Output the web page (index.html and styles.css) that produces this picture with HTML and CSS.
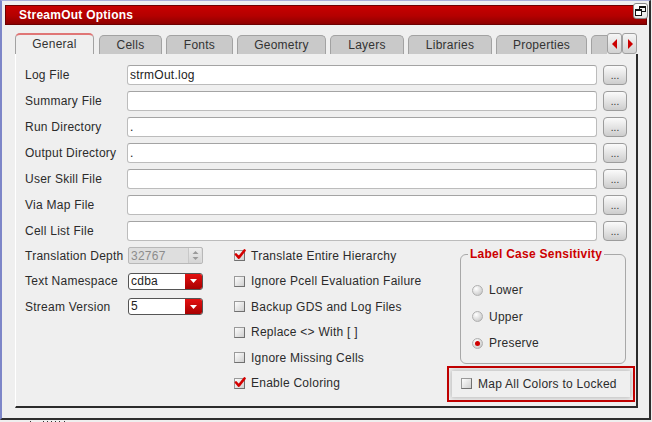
FILE: index.html
```html
<!DOCTYPE html>
<html>
<head>
<meta charset="utf-8">
<link rel="stylesheet" href="styles.css">
</head>
<body>
<div class="window">
  <div class="titlebar">StreamOut Options</div>
  <div class="restore">
    <svg width="13" height="12" viewBox="0 0 13 12">
      <rect x="5.5" y="1.5" width="6" height="5" fill="none" stroke="#111" stroke-width="1"/>
      <rect x="5" y="1" width="7" height="2" fill="#111"/>
      <rect x="1.5" y="4.5" width="6" height="6" fill="#fff" stroke="#111" stroke-width="1"/>
      <rect x="1" y="4" width="7" height="2" fill="#111"/>
    </svg>
  </div>

  <div class="tabs-row">
    <div class="tabs">
      <div class="tab active w-general">General</div>
      <div class="tab w-cells">Cells</div>
      <div class="tab w-fonts">Fonts</div>
      <div class="tab w-geometry">Geometry</div>
      <div class="tab w-layers">Layers</div>
      <div class="tab w-libraries">Libraries</div>
      <div class="tab w-properties">Properties</div>
      <div class="tab w-partial"></div>
    </div>
    <div class="tab-arrows">
      <div class="arrow-btn">
        <svg width="6" height="10" viewBox="0 0 6 10"><path d="M5 0 L0 5 L5 10 Z" fill="#cc0000"/></svg>
      </div>
      <div class="arrow-btn">
        <svg width="6" height="10" viewBox="0 0 6 10"><path d="M1 0 L6 5 L1 10 Z" fill="#cc0000"/></svg>
      </div>
    </div>
  </div>

  <div class="panel">
    <div class="file-rows">
      <div class="file-row"><span class="label">Log File</span><div class="field">strmOut.log</div><div class="dots">...</div></div>
      <div class="file-row"><span class="label">Summary File</span><div class="field"></div><div class="dots">...</div></div>
      <div class="file-row"><span class="label">Run Directory</span><div class="field">.</div><div class="dots">...</div></div>
      <div class="file-row"><span class="label">Output Directory</span><div class="field">.</div><div class="dots">...</div></div>
      <div class="file-row"><span class="label">User Skill File</span><div class="field"></div><div class="dots">...</div></div>
      <div class="file-row"><span class="label">Via Map File</span><div class="field"></div><div class="dots">...</div></div>
      <div class="file-row"><span class="label">Cell List File</span><div class="field"></div><div class="dots">...</div></div>
    </div>

    <div class="lower">
      <div class="col-left">
        <div class="opt-row">
          <span class="label2">Translation Depth</span>
          <div class="spin">
            <span>32767</span>
            <div class="spin-btn">
              <svg width="9" height="13" viewBox="0 0 9 13">
                <path d="M1.5 5 L4.5 2 L7.5 5 Z" fill="#9a9a9a"/>
                <path d="M1.5 8 L4.5 11 L7.5 8 Z" fill="#9a9a9a"/>
              </svg>
            </div>
          </div>
        </div>
        <div class="opt-row">
          <span class="label2">Text Namespace</span>
          <div class="combo"><span class="combo-text">cdba</span><div class="combo-btn"><svg width="7" height="4" viewBox="0 0 7 4"><path d="M0 0 L7 0 L3.5 4 Z" fill="#fff"/></svg></div></div>
        </div>
        <div class="opt-row">
          <span class="label2">Stream Version</span>
          <div class="combo"><span class="combo-text">5</span><div class="combo-btn"><svg width="7" height="4" viewBox="0 0 7 4"><path d="M0 0 L7 0 L3.5 4 Z" fill="#fff"/></svg></div></div>
        </div>
      </div>

      <div class="col-mid">
        <div class="opt-row"><span class="cb checked"><svg width="12" height="11" viewBox="0 0 12 11"><path d="M2 5.5 L4.8 8.6 L10.5 1.5" fill="none" stroke="#d40000" stroke-width="2.6" stroke-linecap="round" stroke-linejoin="round"/></svg></span><span>Translate Entire Hierarchy</span></div>
        <div class="opt-row"><span class="cb"></span><span>Ignore Pcell Evaluation Failure</span></div>
        <div class="opt-row"><span class="cb"></span><span>Backup GDS and Log Files</span></div>
        <div class="opt-row"><span class="cb"></span><span>Replace &lt;&gt; With [ ]</span></div>
        <div class="opt-row"><span class="cb"></span><span>Ignore Missing Cells</span></div>
        <div class="opt-row"><span class="cb checked"><svg width="12" height="11" viewBox="0 0 12 11"><path d="M2 5.5 L4.8 8.6 L10.5 1.5" fill="none" stroke="#d40000" stroke-width="2.6" stroke-linecap="round" stroke-linejoin="round"/></svg></span><span>Enable Coloring</span></div>
      </div>

      <div class="col-right">
        <fieldset class="group">
          <legend>Label Case Sensitivity</legend>
          <div class="radios">
            <div class="radio-row"><span class="radio"></span><span>Lower</span></div>
            <div class="radio-row"><span class="radio"></span><span>Upper</span></div>
            <div class="radio-row"><span class="radio on"></span><span>Preserve</span></div>
          </div>
        </fieldset>
        <div class="highlight">
          <div class="glow">
            <span class="cb"></span><span>Map All Colors to Locked</span>
          </div>
        </div>
      </div>
    </div>
  </div>
</div>
<div class="marks">
  <svg width="40" height="3" viewBox="0 0 40 3">
    <rect x="0" y="0" width="1" height="3" fill="#333"/>
    <rect x="13" y="0" width="1" height="3" fill="#333"/>
    <rect x="17" y="0" width="1" height="3" fill="#333"/>
    <rect x="21" y="0" width="1" height="3" fill="#333"/>
    <rect x="25" y="0" width="1" height="3" fill="#333"/>
    <rect x="29" y="0" width="1" height="3" fill="#333"/>
    <rect x="34" y="0" width="1" height="3" fill="#333"/>
  </svg>
</div>
</body>
</html>
```

FILE: styles.css
```css
html, body {
  margin: 0;
  padding: 0;
}
body {
  background: #efefef;
  font-family: "Liberation Sans", Arial, sans-serif;
  font-size: 12px;
  letter-spacing: 0.25px;
  color: #2b2b2b;
  width: 652px;
  height: 422px;
  overflow: hidden;
}

.window {
  position: relative;
  box-sizing: border-box;
  width: 651px;
  height: 420px;
  border-left: 2px solid #7d86c8;
  border-top: 1px solid #a9aed9;
  border-right: 2px solid #2e2e2e;
  border-bottom: 2px solid #2e2e2e;
  padding: 4px 2px 0 3px;
}

.titlebar {
  box-sizing: border-box;
  height: 20px;
  border: 1px solid #6c0000;
  background: linear-gradient(#c80000, #b40000 55%, #8e0000);
  color: #fff;
  font-weight: bold;
  line-height: 18px;
  padding-left: 13px;
}

.restore {
  position: absolute;
  left: 631px;
  top: 2px;
  box-sizing: border-box;
  width: 15px;
  height: 16px;
  background: linear-gradient(#ffffff, #e4e4e4);
  border: 1px solid #8a8a8a;
  border-radius: 3px;
  display: flex;
  align-items: center;
  justify-content: center;
}

.tabs-row {
  display: flex;
  margin: 8px 0 0 10px;
  width: 622px;
  height: 21px;
}
.tabs {
  width: 592px;
  display: flex;
  align-items: flex-end;
  overflow: hidden;
}
.tab {
  box-sizing: border-box;
  flex-shrink: 0;
  height: 19px;
  margin-right: 4px;
  border: 1px solid #a2a2a2;
  border-bottom: none;
  border-radius: 5px 5px 0 0;
  background: #c9c9c9;
  color: #333;
  text-align: center;
  line-height: 19px;
}
.tab.active {
  height: 21px;
  background: #efefef;
  border-top: 2px solid #e07676;
  line-height: 19px;
  margin-right: 5px;
}
.w-general { width: 79px; }
.w-cells { width: 63px; }
.w-fonts { width: 67px; }
.w-geometry { width: 89px; }
.w-layers { width: 74px; }
.w-libraries { width: 84px; }
.w-properties { width: 91px; }
.w-partial { width: 40px; }

.tab-arrows {
  display: flex;
  width: 30px;
}
.arrow-btn {
  box-sizing: border-box;
  width: 15px;
  height: 21px;
  border: 1px solid #a0a0a0;
  border-radius: 3px;
  background: linear-gradient(#f6f6f6, #d2d2d2);
  display: flex;
  align-items: center;
  justify-content: center;
}

.panel {
  box-sizing: border-box;
  margin-left: 10px;
  width: 623px;
  height: 354px;
  border-left: 1px solid #ffffff;
  border-right: 2px solid #2b2b2b;
  border-bottom: 2px solid #2b2b2b;
  padding: 11px 9px 0 9px;
}

.file-rows {
  display: flex;
  flex-direction: column;
  gap: 6px;
}
.file-row {
  display: flex;
  align-items: center;
  height: 20px;
}
.label {
  width: 102px;
  flex-shrink: 0;
}
.field {
  box-sizing: border-box;
  flex: 1;
  height: 20px;
  margin-right: 6px;
  background: #fff;
  border: 1px solid #bcbcbc;
  border-top-color: #a4a4a4;
  border-radius: 3px;
  padding-left: 2px;
  line-height: 18px;
  color: #222;
}
.dots {
  box-sizing: border-box;
  width: 24px;
  height: 20px;
  border: 1px solid #9c9c9c;
  border-radius: 4px;
  background: linear-gradient(#fbfbfb, #cdcdcd);
  text-align: center;
  font-size: 10px;
  line-height: 19px;
  letter-spacing: 0;
  color: #333;
}

.lower {
  display: flex;
  margin-top: 2px;
}
.opt-row {
  display: flex;
  align-items: center;
  height: 25.5px;
}
.col-left {
  width: 209px;
  flex-shrink: 0;
}
.label2 {
  width: 103px;
  flex-shrink: 0;
}
.spin {
  box-sizing: border-box;
  width: 75px;
  height: 17px;
  display: flex;
  align-items: center;
  justify-content: space-between;
  background: #dedede;
  border: 1px solid #b8b8b8;
  border-radius: 2px;
  color: #8c8c8c;
  padding-left: 2px;
}
.spin-btn {
  box-sizing: border-box;
  width: 13px;
  height: 15px;
  margin-right: 1px;
  display: flex;
  align-items: center;
  justify-content: center;
  background: linear-gradient(#ececec, #d4d4d4);
  border-left: 1px solid #c8c8c8;
}
.combo {
  box-sizing: border-box;
  width: 75px;
  height: 17px;
  display: flex;
  background: #fff;
  border: 1px solid #555;
  border-radius: 3px;
  overflow: hidden;
}
.combo-text {
  flex: 1;
  padding-left: 2px;
  line-height: 15px;
  color: #222;
}
.combo-btn {
  width: 17px;
  display: flex;
  align-items: center;
  justify-content: center;
  background: linear-gradient(#e41010, #a80000);
}

.col-mid {
  width: 213px;
  flex-shrink: 0;
}
.cb {
  box-sizing: border-box;
  position: relative;
  width: 11px;
  height: 11px;
  flex-shrink: 0;
  margin-right: 6px;
  border: 1px solid #9a9a9a;
  border-right-color: #707070;
  border-bottom-color: #707070;
  background: linear-gradient(135deg, #fdfdfd, #cfcfcf);
}
.cb svg {
  position: absolute;
  left: -1px;
  top: -2px;
}

.col-right {
  width: 188px;
  flex-shrink: 0;
}
.group {
  box-sizing: border-box;
  width: 166px;
  margin: 4px 0 0 13px;
  border: 1px solid #a8a8a8;
  border-radius: 6px;
  padding: 0 0 6px 11px;
  min-width: 0;
}
.group legend {
  margin-left: -4px;
  padding: 0 2px;
  font-weight: bold;
  color: #cc0000;
  line-height: 15px;
}
.radios {
  margin-top: 15px;
}
.radio-row {
  display: flex;
  align-items: center;
  height: 26.5px;
}
.radio {
  box-sizing: border-box;
  width: 11px;
  height: 11px;
  border-radius: 50%;
  margin-right: 6px;
  border: 1px solid #b0b0b0;
  background: radial-gradient(circle at 35% 30%, #ffffff, #d2d2d2 70%, #a8a8a8);
  display: flex;
  align-items: center;
  justify-content: center;
}
.radio.on::after {
  content: "";
  width: 5px;
  height: 5px;
  border-radius: 50%;
  background: #d00000;
}
.highlight {
  box-sizing: border-box;
  width: 188px;
  height: 36px;
  margin-top: 2px;
  border: 2px solid #c40000;
  padding: 3px 3px;
}
.glow {
  box-sizing: border-box;
  height: 100%;
  display: flex;
  align-items: center;
  padding-left: 9px;
  box-shadow: 0 0 5px 1px rgba(0, 0, 0, 0.22);
}

.marks {
  padding-left: 30px;
  height: 2px;
  line-height: 0;
}
```
